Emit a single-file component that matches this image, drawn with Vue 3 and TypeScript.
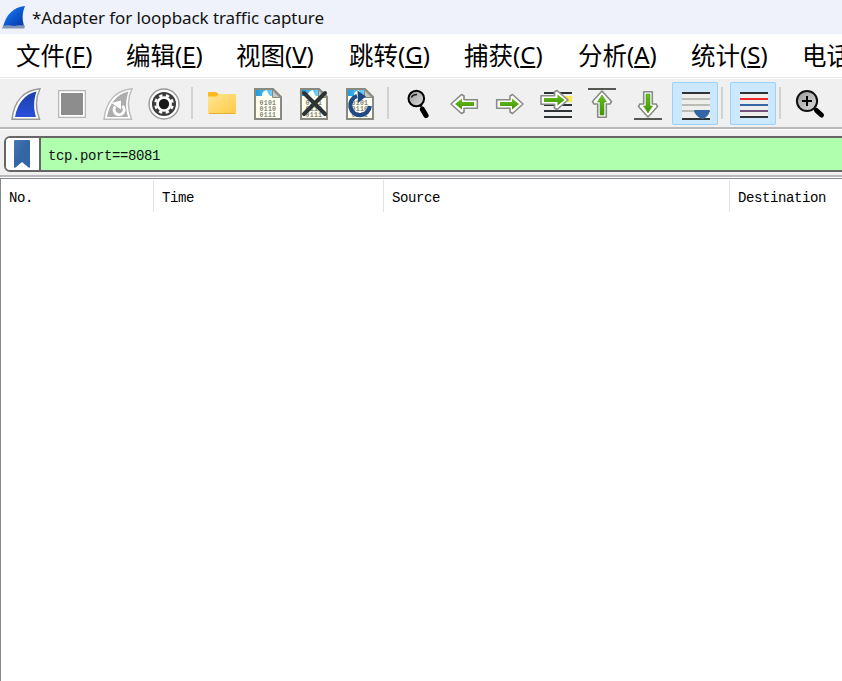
<script setup lang="ts">
interface MenuItem { label: string; key?: string }

const title = '*Adapter for loopback traffic capture'
const menus: MenuItem[] = [
  { label: '文件', key: 'F' },
  { label: '编辑', key: 'E' },
  { label: '视图', key: 'V' },
  { label: '跳转', key: 'G' },
  { label: '捕获', key: 'C' },
  { label: '分析', key: 'A' },
  { label: '统计', key: 'S' },
  { label: '电话' },
]
const columns: string[] = ['No.', 'Time', 'Source', 'Destination']
const bits: string[] = ['0101', '0110', '0111']
const filter = 'tcp.port==8081'
</script>

<template>
  <div class="window">
    <svg class="defs" width="0" height="0">
      <defs>
        <linearGradient id="fin" x1="0" y1="0" x2="0" y2="1"><stop offset="0" stop-color="#1b3fa6" /><stop offset="1" stop-color="#2a50dc" /></linearGradient>
        <linearGradient id="logo" x1="0" y1="0" x2="1" y2="1"><stop offset="0" stop-color="#2a8cf0" /><stop offset=".55" stop-color="#0b55cf" /><stop offset="1" stop-color="#08349c" /></linearGradient>
        <linearGradient id="folder" x1="0" y1="0" x2="1" y2="1"><stop offset="0" stop-color="#ffe596" /><stop offset="1" stop-color="#ffca43" /></linearGradient>
        <linearGradient id="sky" x1="0" y1="0" x2="1" y2="0"><stop offset="0" stop-color="#1c9ddd" /><stop offset="1" stop-color="#6ed0fa" /></linearGradient>
        <linearGradient id="lens" x1="0" y1="0" x2="1" y2="1"><stop offset="0" stop-color="#999" /><stop offset="1" stop-color="#ddd" /></linearGradient>
        <linearGradient id="green" x1="0" y1="0" x2="0" y2="1"><stop offset="0" stop-color="#66c21b" /><stop offset="1" stop-color="#43920a" /></linearGradient>
        <linearGradient id="mark" x1="0" y1="0" x2="1" y2="1"><stop offset="0" stop-color="#4575b5" /><stop offset=".5" stop-color="#3465a4" /></linearGradient>
        <g id="doc">
          <path d="M255 89H273L281 97V119H255Z" fill="#fffff2" />
          <path d="M256 90H272V96H270C268 93 267 91 267 90C263 91 262 93 262 96H256Z" fill="url(#sky)" />
          <path d="M255 89H273L281 97V119H255Z" fill="none" stroke="#888a82" stroke-width="2" />
          <path d="M272.500 90V97.500H280Z" fill="#c8c8c0" stroke="#888a82" stroke-width="1" />
          <text v-for="(row, i) in bits" :key="row" x="259.500" :y="104.500 + i * 6" class="bits" textLength="16.500">{{ row }}</text>
        </g>
      </defs>
    </svg>

    <header class="titlebar">
      <svg class="logo" width="32" height="34" viewBox="0 0 32 34">
        <path d="M3 27C6 15 13 7 25 6C22 13 22 20 24.500 27Z" fill="url(#logo)" />
        <path d="M3 26C9 24 12 27 17 25.500C20 24.500 22 26 24.500 25V28.500H2Z" fill="#8295b8" />
      </svg>
      <span class="title">{{ title }}</span>
    </header>

    <nav class="menubar">
      <span v-for="m in menus" :key="m.label" class="menu"><span class="cjk">{{ m.label }}</span><span v-if="m.key" class="latin">(<span class="key">{{ m.key }}</span>)</span></span>
    </nav>

    <div class="toolbar">
      <button class="tool"><svg viewBox="3 79 46 48">
        <path d="M12 119.300C14 101 24 90 40 88.700C35.500 98 35.500 109 39.500 119.300Z" fill="#fff" stroke="#999" stroke-width="1.400" />
        <path d="M15 117C17.500 103 25 94 36.500 91.500C33.500 100 33.500 108.500 36 117Z" fill="url(#fin)" />
      </svg></button>
      <button class="tool"><svg viewBox="49 79 46 48">
        <rect x="58.600" y="90.600" width="26.800" height="26.800" fill="#fff" stroke="#b7b7b7" stroke-width="1.300" />
        <rect x="61" y="93" width="22" height="22" fill="#8d8d8d" />
      </svg></button>
      <button class="tool"><svg viewBox="95 79 46 48">
        <path d="M104 119.300C106 101 116 90 132 88.700C127.500 98 127.500 109 131.500 119.300Z" fill="#fff" stroke="#bdbdbd" stroke-width="1.400" />
        <path d="M107 117C109.500 103 117 94 128.500 91.500C125.500 100 125.500 108.500 128 117Z" fill="#adadad" />
        <path d="M115.300 106.500A5 5 0 1 0 122.500 106" fill="none" stroke="#fff" stroke-width="3" />
        <path d="M111.500 103L121 100.500V109.500Z" fill="#fff" />
      </svg></button>
      <button class="tool"><svg viewBox="141 79 46 48">
        <circle cx="164" cy="104" r="15" fill="#fff" stroke="#999" stroke-width="1.400" />
        <circle cx="164" cy="104" r="12" fill="#3b3b3b" />
        <circle cx="164" cy="104" r="6.500" fill="#191919" stroke="#fff" stroke-width="2.700" />
        <circle cx="164" cy="104" r="8.700" fill="none" stroke="#fff" stroke-width="2.400" stroke-dasharray="3.400 3.433" transform="rotate(11 164 104)" />
      </svg></button>
      <i class="sep"></i>
      <button class="tool"><svg viewBox="199 79 46 48">
        <path d="M208 93Q208 92 209 92H216L219 94.500H235Q236 94.500 236 96V104H208Z" fill="#fbb91d" />
        <path d="M208 96.500H216.500L219 94H235Q236 94 236 95V113Q236 114 235 114H209Q208 114 208 113Z" fill="url(#folder)" />
        <path d="M209 113.500H235" stroke="#e8ae37" />
      </svg></button>
      <button class="tool"><svg viewBox="245 79 46 48"><use href="#doc" /></svg></button>
      <button class="tool"><svg viewBox="291 79 46 48">
        <use href="#doc" x="46" />
        <path d="M304 93L325 114M325 93L304 114" stroke="#2e3436" stroke-width="4" stroke-linecap="round" />
      </svg></button>
      <button class="tool"><svg viewBox="337 79 46 48">
        <use href="#doc" x="92" />
        <path d="M357 96A9.800 9.800 0 1 0 369.800 106" fill="none" stroke="#204a87" stroke-width="4.200" />
        <path d="M357.500 90.500L366 96.500L358 103Z" fill="#204a87" />
      </svg></button>
      <i class="sep"></i>
      <button class="tool"><svg viewBox="395 79 46 48">
        <path d="M420.500 105L422.500 109" stroke="#222" stroke-width="2.500" />
        <path d="M422.500 109.500L426 115.500" stroke="#000" stroke-width="5.200" stroke-linecap="round" />
        <circle cx="416.300" cy="98.500" r="7.800" fill="url(#lens)" stroke="#000" stroke-width="2" />
        <path d="M411.500 97.500Q412.500 94.500 417 94.500" fill="none" stroke="#111" stroke-width="1.500" />
      </svg></button>
      <button class="tool"><svg viewBox="441 79 46 48">
        <path d="M451 104L461.500 94.500L464 96V99.700H477.300V108.300H464V112L461.500 113.500Z" class="arrow" />
        <path d="M455 104L462 98.500V102H474V106H462V109.500Z" fill="url(#green)" />
      </svg></button>
      <button class="tool"><svg viewBox="487 79 46 48">
        <path d="M523 104L512.500 94.500L510 96V99.700H496.700V108.300H510V112L512.500 113.500Z" class="arrow" />
        <path d="M519 104L512 98.500V102H500V106H512V109.500Z" fill="url(#green)" />
      </svg></button>
      <button class="tool"><svg viewBox="533 79 46 48">
        <rect x="564" y="96" width="8" height="6" fill="#fce94f" />
        <path d="M544 93H572M544 105H572M544 111H572M544 117H572" stroke="#2e3436" stroke-width="2" />
        <path d="M568 100L557 90.500L554.500 92V95.700H541V104.300H554.500V108L557 109.500Z" class="arrow" />
        <path d="M564.500 100L557.500 94.500V98H544V102H557.500V105.500Z" fill="url(#green)" />
      </svg></button>
      <button class="tool"><svg viewBox="579 79 46 48">
        <path d="M588 89H616" stroke="#555753" stroke-width="2" />
        <path d="M602 91L611.500 101.500L610 104H606.300V117.300H597.700V104H594L592.500 101.500Z" class="arrow" />
        <path d="M602 95L606.500 102H604V115H600V102H597.500Z" fill="url(#green)" stroke="#4b9c10" stroke-width=".6" />
      </svg></button>
      <button class="tool"><svg viewBox="625 79 46 48">
        <path d="M634 119H662" stroke="#555753" stroke-width="2" />
        <path d="M648 117L657.500 106.500L656 104H652.300V91.700H643.700V104H640L638.500 106.500Z" class="arrow" />
        <path d="M648 113L652.500 106H650V94H646V106H643.500Z" fill="url(#green)" stroke="#4b9c10" stroke-width=".6" />
      </svg></button>
      <button class="tool checked scroll"><svg viewBox="672 79 46 48">
        <rect x="682" y="93" width="28" height="26" fill="#eeeeec" />
        <path d="M682 93H710M682 119H710" stroke="#2e3436" stroke-width="2" />
        <path d="M682 99H710M682 105H710M682 111H710" stroke="#babdb6" stroke-width="2" />
        <path d="M695 110H709Q710 110 710 111Q709 115 705 118Q702.500 120 700 118Q695 115 694 111Q694 110 695 110Z" fill="#3465a4" />
      </svg></button>
      <i class="sep late"></i>
      <button class="tool checked"><svg viewBox="730 79 46 48">
        <rect x="740" y="93" width="28" height="24" fill="#eeeeec" />
        <path d="M740 93H768M740 117H768" stroke="#2e3436" stroke-width="2" />
        <path d="M740 99H768" stroke="#ef2929" stroke-width="2" />
        <path d="M740 105H768" stroke="#3465a4" stroke-width="2" />
        <path d="M740 111H768" stroke="#75507b" stroke-width="2" />
      </svg></button>
      <i class="sep late"></i>
      <button class="tool"><svg viewBox="788 79 46 48">
        <path d="M813.500 108L817 111" stroke="#333" stroke-width="2.200" />
        <path d="M816.500 110.500L821.500 115" stroke="#000" stroke-width="5" stroke-linecap="round" />
        <circle cx="807" cy="101" r="10.100" fill="url(#lens)" stroke="#111" stroke-width="2" />
        <path d="M807 96V106M802 101H812" stroke="#000" stroke-width="2" />
      </svg></button>
    </div>

    <div class="filterbar">
      <div class="filter">
        <span class="bookmark"><svg width="33" height="32" viewBox="6 138 33 32"><path d="M14 141Q14 140 15 140H29Q30 140 30 141V167Q30 168 28.500 167.500L22 162L15.500 167.500Q14 168 14 167Z" fill="url(#mark)" /></svg></span>
        <span class="expr">{{ filter }}</span>
      </div>
    </div>

    <main class="packets">
      <div class="head"><span v-for="c in columns" :key="c" class="col">{{ c }}</span></div>
    </main>
  </div>
</template>

<style>
body { margin: 0; overflow: hidden; }
</style>

<style scoped>
.window { width: 842px; height: 681px; overflow: hidden; display: flex; flex-direction: column; background: #fff; color: #000; }
.defs { position: absolute; }
.titlebar { height: 34px; flex: none; display: flex; align-items: center; background: #eff2fa; }
.title { font: 17px/34px "Noto Sans", sans-serif; letter-spacing: -0.07px; padding-top: 2px; white-space: nowrap; color: #111; }
.menubar { height: 43px; flex: none; box-sizing: content-box; border-bottom: 1px solid #ececec; padding-left: 16px; display: grid; grid-template-columns: 110px 110px 113px 115px 114px 113px 111px 110px; margin-bottom: 1px; }
.menu { display: flex; align-items: flex-start; white-space: nowrap; height: 43px; }
.cjk { font: 24.500px/41px "Noto Sans CJK SC", sans-serif; }
.latin { font: 24px/41px "Noto Sans", sans-serif; letter-spacing: 0; }
.key { text-decoration: underline; text-decoration-thickness: 2px; text-underline-offset: 2px; text-decoration-skip-ink: none; }
.toolbar { height: 48px; flex: none; background: #f0f0f0; border-bottom: 2px solid #b8b8b8; padding-left: 3px; display: flex; }
.tool { width: 46px; height: 48px; flex: none; padding: 0; border: 0; background: none; }
.tool svg { display: block; width: 46px; height: 48px; }
.checked { height: 43px; margin-top: 3px; background: #cce8ff; box-shadow: inset 0 0 0 1px #99d1ff; border-radius: 2px; }
.checked svg { margin-top: -3px; }
.scroll { margin-left: 1px; }
.sep { width: 2px; height: 32px; flex: none; margin: 8px 6px 0 4px; background: #d2d2d2; }
.late { margin: 8px 7px 0 3px; }
.arrow { fill: #fff; stroke: #888a85; stroke-width: 1.600; stroke-linejoin: round; }
.bits { font: 700 6.500px "Liberation Mono", monospace; fill: #858577; }
.filterbar { height: 38px; flex: none; padding: 6px 0 1px 4px; background: #f0f0f0; border-top: 1px solid #fff; border-bottom: 2px solid #b8b8b8; box-sizing: content-box; margin-bottom: 1px; }
.filter { height: 32px; width: 850px; border: 2px solid #666; border-radius: 6px; background: #afffaf; display: flex; overflow: hidden; }
.bookmark { width: 33px; height: 32px; background: #fff; border-right: 2px solid #666; }
.bookmark svg { display: block; }
.expr { padding-left: 7px; font: 14px/36px "Liberation Mono", monospace; letter-spacing: -0.4px; color: #111; }
.packets { flex: 1; border-top: 1px solid #828790; border-left: 1px solid #828790; }
.head { margin-top: 1px; display: grid; grid-template-rows: 32px; grid-template-columns: 153px 230px 346px 346px; }
.col { border-right: 1px solid #e2e2e2; padding-left: 8px; font: 14px/36px "Liberation Mono", monospace; letter-spacing: -0.4px; }
</style>
